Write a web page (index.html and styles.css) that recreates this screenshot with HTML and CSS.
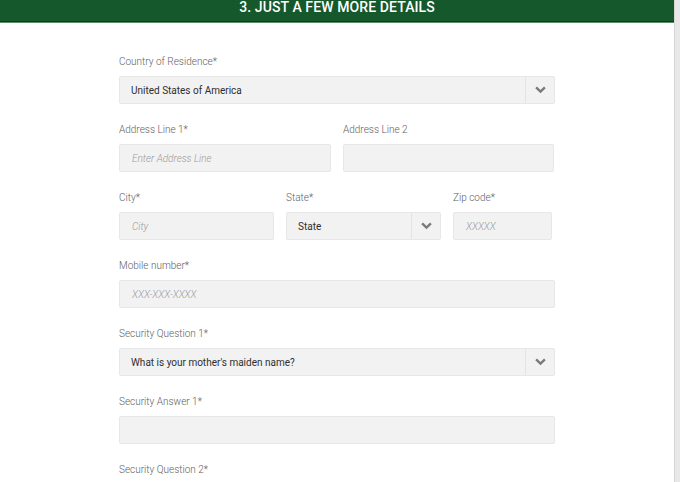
FILE: index.html
```html
<!DOCTYPE html>
<html lang="en">
<head>
<meta charset="utf-8">
<title>Just a few more details</title>
<link rel="stylesheet" href="styles.css">
</head>
<body>
<div class="page">
  <main class="main">
    <header class="bar"><h1 class="bar-title">3. JUST A FEW MORE DETAILS</h1></header>
    <form class="form">
      <div class="group">
        <label class="label">Country of Residence*</label>
        <div class="select">
          <span class="select-value">United States of America</span>
          <span class="select-btn"><svg class="chev" viewBox="0 0 12 8"><path d="M1.2 1.2 L6 5.8 L10.8 1.2" /></svg></span>
        </div>
      </div>
      <div class="row row-2">
        <div class="group">
          <label class="label">Address Line 1*</label>
          <div class="input"><span class="ph">Enter Address Line</span></div>
        </div>
        <div class="group">
          <label class="label">Address Line 2</label>
          <div class="input"></div>
        </div>
      </div>
      <div class="row row-3">
        <div class="group">
          <label class="label">City*</label>
          <div class="input"><span class="ph">City</span></div>
        </div>
        <div class="group">
          <label class="label">State*</label>
          <div class="select">
            <span class="select-value">State</span>
            <span class="select-btn"><svg class="chev" viewBox="0 0 12 8"><path d="M1.2 1.2 L6 5.8 L10.8 1.2" /></svg></span>
          </div>
        </div>
        <div class="group">
          <label class="label">Zip code*</label>
          <div class="input"><span class="ph">XXXXX</span></div>
        </div>
      </div>
      <div class="group">
        <label class="label">Mobile number*</label>
        <div class="input"><span class="ph">XXX-XXX-XXXX</span></div>
      </div>
      <div class="group">
        <label class="label">Security Question 1*</label>
        <div class="select">
          <span class="select-value">What is your mother's maiden name?</span>
          <span class="select-btn"><svg class="chev" viewBox="0 0 12 8"><path d="M1.2 1.2 L6 5.8 L10.8 1.2" /></svg></span>
        </div>
      </div>
      <div class="group">
        <label class="label">Security Answer 1*</label>
        <div class="input"></div>
      </div>
      <div class="group">
        <label class="label">Security Question 2*</label>
        <div class="select">
          <span class="select-btn select-btn-end"><svg class="chev" viewBox="0 0 12 8"><path d="M1.2 1.2 L6 5.8 L10.8 1.2" /></svg></span>
        </div>
      </div>
    </form>
  </main>
  <div class="rail"></div>
</div>
</body>
</html>
```

FILE: styles.css
```css
html, body {
  margin: 0;
  padding: 0;
  height: 100%;
  overflow: hidden;
  background: #ffffff;
}

body {
  font-family: Roboto, "Liberation Sans", Arial, sans-serif;
}

.page {
  display: flex;
  height: 482px;
}

.main {
  flex: 1;
  min-width: 0;
}

.rail {
  width: 5px;
  background: #e8e8e8;
  border-left: 1px solid #d6d6d6;
}

.bar {
  background: #14582c;
  height: 21px;
  border-bottom: 1px solid #0b3b1b;
  box-shadow: 0 1px 0 #5f8c69;
  text-align: center;
}

.bar-title {
  margin: 0;
  color: #ffffff;
  font-size: 14px;
  font-weight: 500;
  line-height: 15px;
  letter-spacing: 0.1px;
}

.form {
  width: 436px;
  margin: 0 auto;
  padding-top: 33px;
}

.group {
  display: flex;
  flex-direction: column;
  margin-bottom: 19px;
}

.row {
  display: grid;
  column-gap: 12px;
}

.row-2 {
  grid-template-columns: 212px 211px;
}

.row-3 {
  grid-template-columns: 155px 155px 99px;
}

.label {
  font-size: 10px;
  font-weight: 300;
  line-height: 14px;
  color: #5e5e5e;
  margin-bottom: 7px;
}

.input,
.select {
  height: 26px;
  background: #f2f2f2;
  border: 1px solid #e7e7e7;
  border-radius: 2px;
  display: flex;
  align-items: center;
  box-sizing: content-box;
}

.ph {
  padding-left: 12px;
  font-size: 10px;
  font-style: italic;
  font-weight: 300;
  color: #9a9a9a;
}

.select-value {
  flex: 1;
  padding-left: 11px;
  font-size: 10px;
  color: #2e2e2e;
}

.select-btn {
  width: 28px;
  align-self: stretch;
  border-left: 1px solid #e3e3e3;
  display: flex;
  align-items: center;
  justify-content: center;
}

.select-btn-end {
  margin-left: auto;
}

.chev {
  width: 11px;
  height: 8px;
  fill: none;
  stroke: #7a7a7a;
  stroke-width: 2.6;
  stroke-linecap: butt;
  stroke-linejoin: miter;
}
```
